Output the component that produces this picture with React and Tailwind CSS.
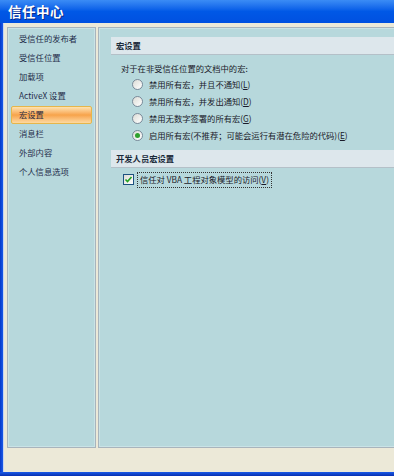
import React from "react";

const font = { fontFamily: '"Noto Sans CJK SC", "Liberation Sans", sans-serif' };

function Radio({ checked, label }) {
  return (
    <div className="flex items-center h-[17px] pl-[11px]">
      <span className="w-[11px] h-[11px] rounded-full border border-[#7a8a99] bg-gradient-to-br from-[#dcdcd6] to-white flex items-center justify-center shrink-0">
        {checked && <span className="w-[5px] h-[5px] rounded-full bg-[#2ea12e]" />}
      </span>
      <span className="ml-[6px] whitespace-nowrap">{label}</span>
    </div>
  );
}

function Header({ children }) {
  return (
    <div className="ml-[11px] h-[18px] bg-[#dde7ec] border-b border-[#b4c0c8] flex items-center pl-[5px] font-bold text-[#1a2a3a]">
      {children}
    </div>
  );
}

export default function App() {
  const items = [
    "受信任的发布者",
    "受信任位置",
    "加载项",
    "ActiveX 设置",
    "宏设置",
    "消息栏",
    "外部内容",
    "个人信息选项",
  ];
  return (
    <div className="w-[394px] h-screen flex flex-col overflow-hidden text-[8.3px] text-[#1f2d4a]" style={font}>
      <div className="h-[23px] shrink-0 bg-gradient-to-b from-[#3b8cf5] via-[#0058e6] to-[#0050e0] flex items-center pl-[8px]">
        <span className="text-white font-bold text-[13.5px] tracking-[0.5px]" style={{ textShadow: "1px 1px 0 #0a2a8a" }}>
          信任中心
        </span>
      </div>
      <div className="flex-1 min-h-0 flex">
        <div className="w-[3px] shrink-0 bg-gradient-to-r from-[#0838c8] to-[#1a5ae8]" />
        <div className="w-[1px] shrink-0 bg-[#c8d4ee]" />
        <div className="flex-1 flex bg-[#ece9d8] pl-[4px] pt-[5px] pb-[25px] gap-[4px]">
          <div className="w-[87px] shrink-0 bg-[#b7d8dc] border border-[#c9e3e6] outline outline-1 outline-[#a8b4bc] px-[2px]">
            {items.map((t, i) =>
              i === 4 ? (
                <div
                  key={t}
                  className="h-[18px] my-[0.5px] flex items-center pl-[7px] rounded-[2px] border border-[#e6b64a] bg-gradient-to-b from-[#fde3b0] via-[#f7a34a] to-[#fdd9a0] text-[#2a2a40]"
                >
                  {t}
                </div>
              ) : (
                <div key={t} className="h-[19px] flex items-center pl-[8px]">
                  {t}
                </div>
              )
            )}
          </div>
          <div className="flex-1 -mr-[4px] bg-[#b7d8dc] border border-[#c9e3e6] outline outline-1 outline-[#a8b4bc] pt-[8px] text-[#1a1a2a]">
            <Header>宏设置</Header>
            <div className="pl-[21px] pt-[5px]">
              <div className="h-[16px] flex items-center">对于在非受信任位置的文档中的宏:</div>
              <Radio label={<>禁用所有宏，并且不通知(<u>L</u>)</>} />
              <Radio label={<>禁用所有宏，并发出通知(<u>D</u>)</>} />
              <Radio label={<>禁用无数字签署的所有宏(<u>G</u>)</>} />
              <Radio checked label={<>启用所有宏(不推荐；可能会运行有潜在危险的代码)(<u>E</u>)</>} />
            </div>
            <div className="h-[6px]" />
            <Header>开发人员宏设置</Header>
            <div className="pl-[23px] pt-[3px] flex items-center h-[20px]">
              <span className="w-[11px] h-[11px] border border-[#1c5180] bg-gradient-to-br from-[#dcdcd6] to-white flex items-center justify-center shrink-0">
                <svg width="9" height="9" viewBox="0 0 9 9">
                  <path d="M1.5 4.5 L3.5 6.5 L7.5 2" stroke="#21a121" strokeWidth="1.6" fill="none" />
                </svg>
              </span>
              <span className="ml-[3px] px-[2px] h-[16px] flex items-center border border-dotted border-[#333]">
                信任对 VBA 工程对象模型的访问(<u>V</u>)
              </span>
            </div>
          </div>
        </div>
      </div>
      <div className="h-[4px] shrink-0 bg-gradient-to-b from-[#1a5ae8] to-[#0a2fb0]" />
    </div>
  );
}
